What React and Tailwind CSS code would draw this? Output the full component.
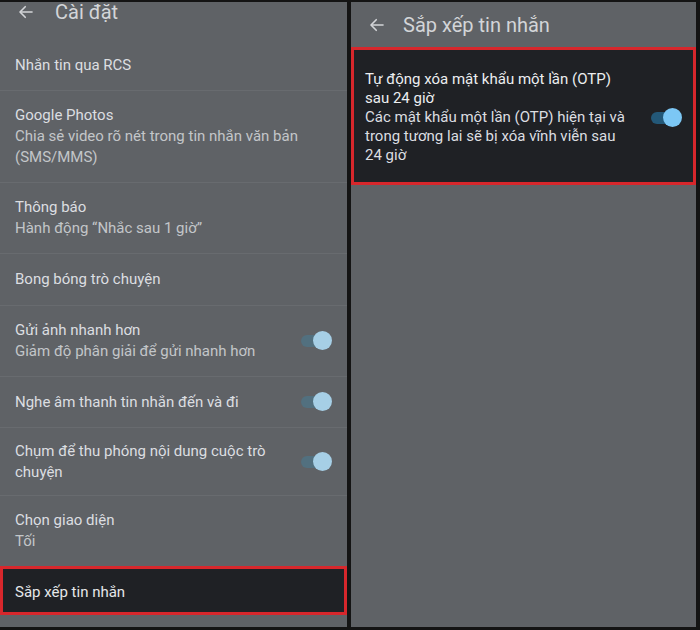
import React from "react";

const font = { fontFamily: "Roboto, 'Noto Sans', sans-serif" };

function BackArrow({ className }) {
    return (
        <svg viewBox="0 0 24 24" className={className} fill="none" stroke="currentColor" strokeWidth="2.2" strokeLinecap="round" strokeLinejoin="round">
            <path d="M20 12H5" />
            <path d="M11 5l-7 7 7 7" />
        </svg>
    );
}

function Toggle({ bright }) {
    return (
        <div className="relative w-[31px] h-[20px] shrink-0">
            <div className={`absolute left-0 top-[4px] w-[26px] h-[12px] rounded-full ${bright ? "bg-[#235878]" : "bg-[#52707f]"}`} />
            <div className={`absolute right-0 top-0 w-[19px] h-[19px] rounded-full ${bright ? "bg-[#7cc7f5]" : "bg-[#a6cfe6]"}`} />
        </div>
    );
}

function Item({ title, sub, toggle, className = "py-[14px]" }) {
    return (
        <div className={`flex items-center pl-[15px] pr-[15px] border-b border-[#686b6f] ${className}`}>
            <div className="flex-1 min-w-0">
                <div className="text-[15px] leading-[21px] text-[#dcdee1]">{title}</div>
                {sub && <div className="text-[15px] leading-[21px] text-[#c3c6c9]">{sub}</div>}
            </div>
            {toggle && <div className="ml-[16px]"><Toggle /></div>}
        </div>
    );
}

export default function App() {
    return (
        <div className="w-[700px] h-[630px] bg-[#141414] flex pt-[2px] pb-[3px] pr-[4px] overflow-hidden" style={font}>
            {/* Left: settings list */}
            <div className="w-[347px] bg-[#5f6266] flex flex-col">
                <div className="h-[38px] flex items-start text-[#d3d5d8]">
                    <BackArrow className="w-[18px] h-[18px] ml-[17px] mt-[1px]" />
                    <span className="ml-[20px] text-[20px] leading-[20px]">Cài đặt</span>
                </div>
                <Item title="Nhắn tin qua RCS" className="h-[51px]" />
                <Item
                    title="Google Photos"
                    sub={<>Chia sẻ video rõ nét trong tin nhắn văn bản<br />(SMS/MMS)</>}
                />
                <Item title="Thông báo" sub="Hành động “Nhắc sau 1 giờ”" />
                <Item title="Bong bóng trò chuyện" className="h-[52px]" />
                <Item title="Gửi ảnh nhanh hơn" sub="Giảm độ phân giải để gửi nhanh hơn" toggle />
                <Item title="Nghe âm thanh tin nhắn đến và đi" toggle className="h-[51px]" />
                <Item title="Chụm để thu phóng nội dung cuộc trò chuyện" toggle className="pt-[13px] pb-[12px]" />
                <Item title="Chọn giao diện" sub="Tối" />
                <div className="h-[49px] mt-[-1px] border-[3px] border-[#d7272c] bg-[#1f2125] flex items-center pl-[12px]">
                    <span className="text-[15px] leading-[21px] text-[#e6e8ea] mt-[4px]">Sắp xếp tin nhắn</span>
                </div>
            </div>

            {/* Divider */}
            <div className="w-[4px]" />

            {/* Right: message organisation */}
            <div className="flex-1 bg-[#5f6266] flex flex-col">
                <div className="h-[45px] flex items-center text-[#d3d5d8]">
                    <BackArrow className="w-[18px] h-[18px] ml-[17px]" />
                    <span className="ml-[17px] text-[20px] leading-[24px]">Sắp xếp tin nhắn</span>
                </div>
                <div className="border-[3px] border-[#d7272c] bg-[#1f2125] flex items-center pl-[11px] pr-[10px] pt-[20px] pb-[17px]">
                    <div className="w-[268px]">
                        <div className="text-[15px] leading-[19px] text-[#eceef0]">Tự động xóa mật khẩu một lần (OTP) sau 24 giờ</div>
                        <div className="text-[15px] leading-[19px] text-[#dcdee1]">Các mật khẩu một lần (OTP) hiện tại và trong tương lai sẽ bị xóa vĩnh viễn sau 24 giờ</div>
                    </div>
                    <div className="ml-auto mr-[1px]">
                        <Toggle bright />
                    </div>
                </div>
            </div>
        </div>
    );
}
